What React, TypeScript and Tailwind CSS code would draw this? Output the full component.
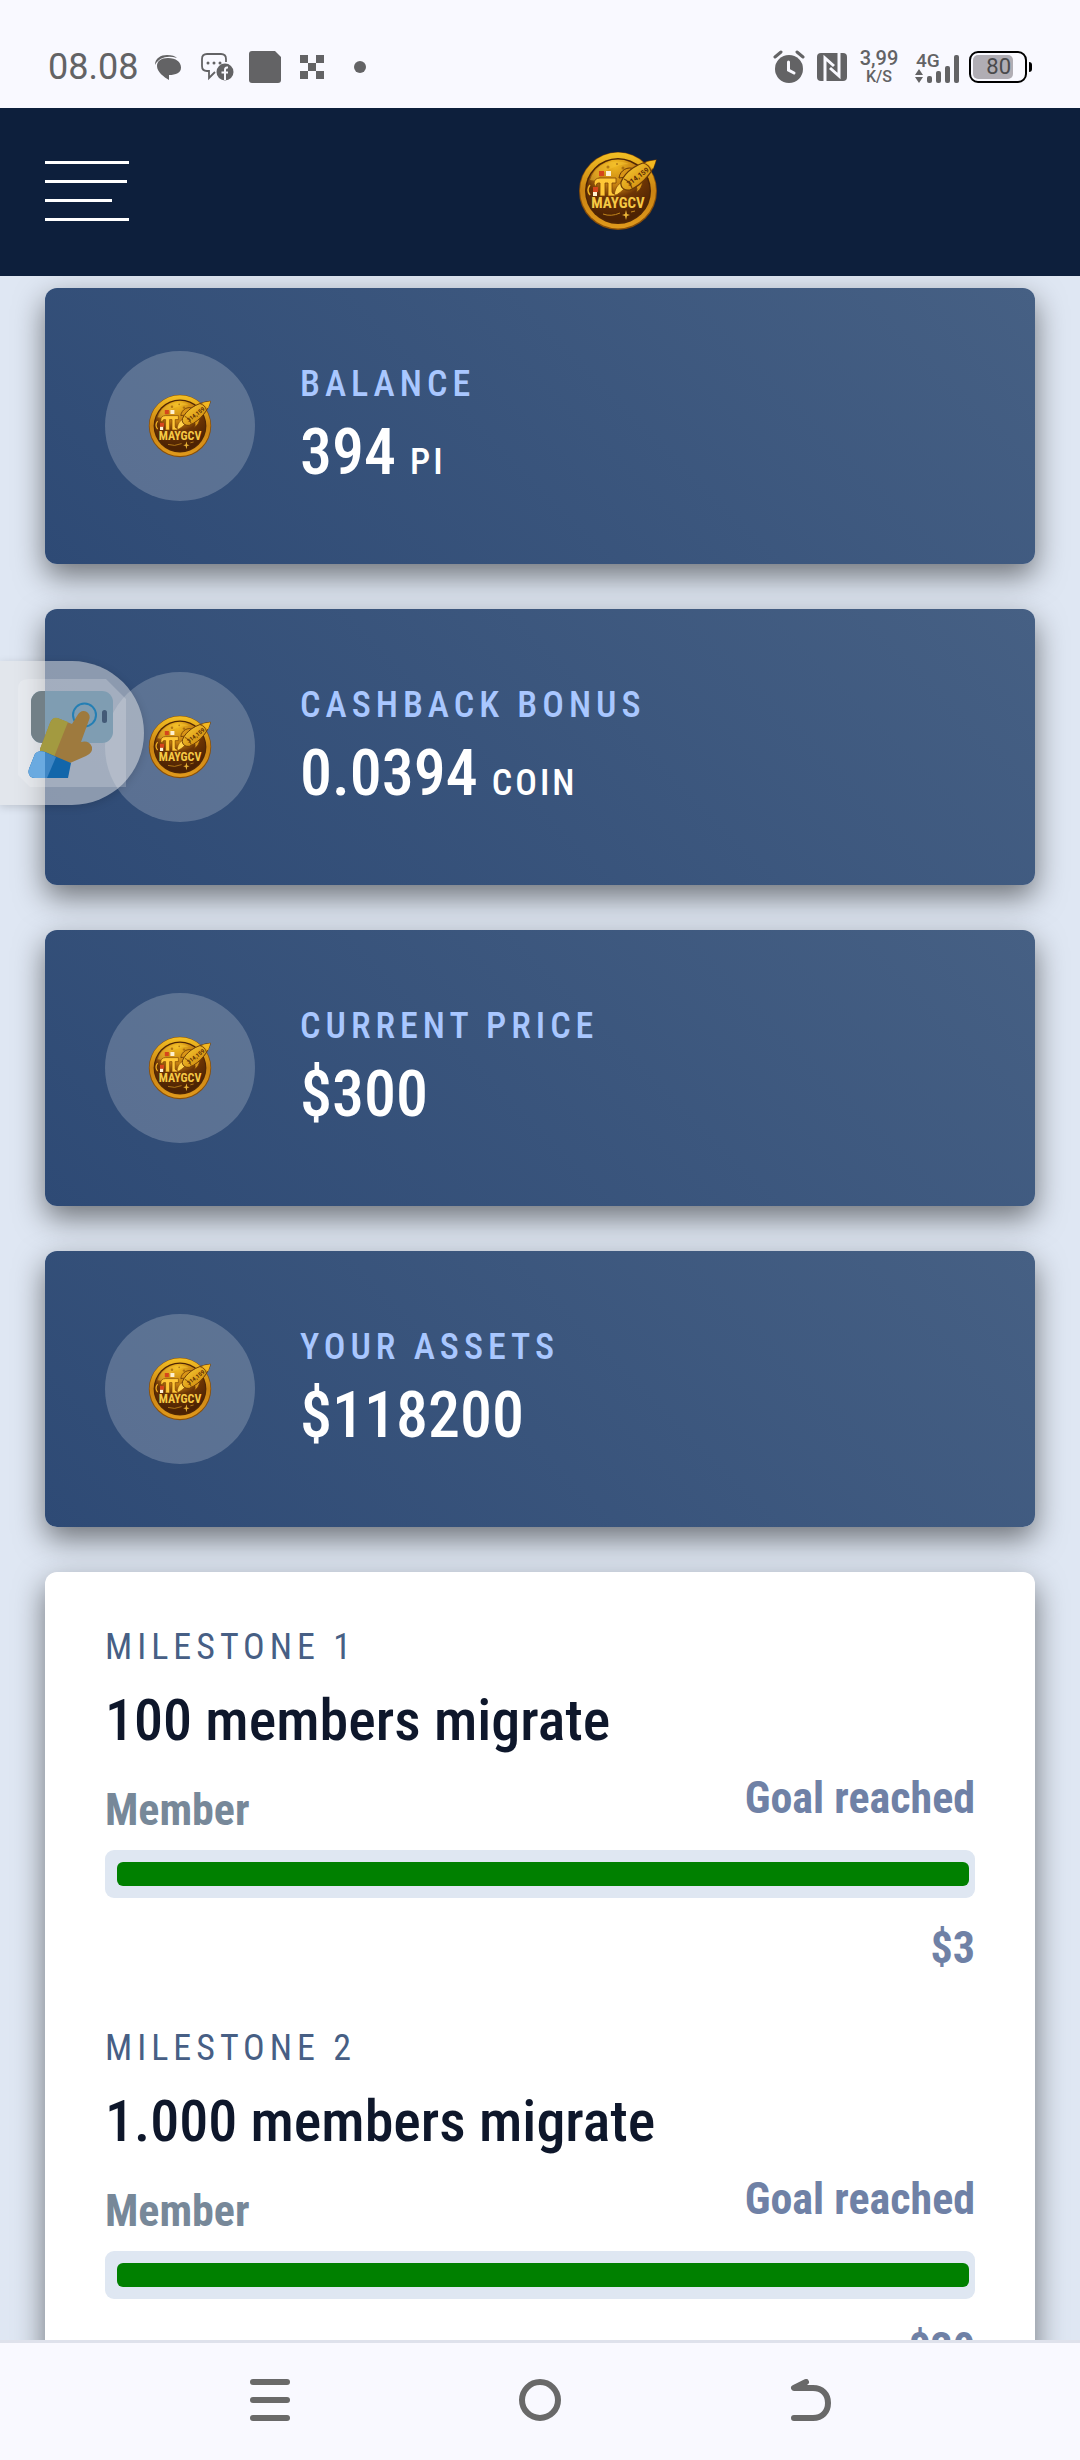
import React from "react";

function Coin({ className }: { className: string }) {
  return (
    <svg viewBox="0 1 80 80" className={className} role="img" aria-label="MAYGCV coin">
      <defs>
        <linearGradient id="rim" x1="0" y1="0" x2="0" y2="1">
          <stop offset="0" stopColor="#f3c024" />
          <stop offset="0.5" stopColor="#c98212" />
          <stop offset="1" stopColor="#e09a1c" />
        </linearGradient>
        <radialGradient id="face" cx="0.45" cy="0.08" r="0.85">
          <stop offset="0" stopColor="#f2bb20" />
          <stop offset="0.4" stopColor="#c27d10" />
          <stop offset="0.62" stopColor="#6d3505" />
          <stop offset="1" stopColor="#4c2203" />
        </radialGradient>
        <linearGradient id="rocket" x1="0" y1="0" x2="1" y2="1">
          <stop offset="0" stopColor="#ffd83c" />
          <stop offset="0.6" stopColor="#dc9c17" />
          <stop offset="1" stopColor="#9c5b08" />
        </linearGradient>
      </defs>
      <circle cx="40" cy="41" r="39" fill="#8a4f08" />
      <circle cx="40" cy="40.500" r="38" fill="url(#rim)" />
      <circle cx="40" cy="41" r="33" fill="#4f2604" />
      <circle cx="40" cy="41" r="31.500" fill="url(#face)" />
      <path d="M12 30C18 13 35 8 51 14C38 15 25 20 18 31Z" fill="#f5c431" opacity="0.5" />
      <g fill="#8b500b" opacity="0.6">
        <circle cx="30" cy="17" r="1.500" />
        <circle cx="39" cy="14" r="1" />
        <circle cx="45" cy="18" r="1.500" />
        <circle cx="25" cy="22" r="1" />
      </g>
      <path d="M41 28C42 20 50 16 56 19L49 27ZM58 31L64 25C66 32 64 39 58 43C60 38 58 36 56 35Z" fill="#d99517" stroke="#6b3906" strokeWidth="1" />
      <path d="M36 46C37 39 39 34 45 32L48 37C44 41 41 44 36 46Z" fill="#ffd24a" stroke="#8f4e07" strokeWidth="0.800" />
      <path d="M43 32C47 22 59 12 78 10C76 20 66 34 52 40C47 41 42 38 43 32Z" fill="url(#rocket)" stroke="#6b3a06" strokeWidth="1.200" />
      <path d="M68 12L78 10L75 19Z" fill="#f3b820" />
      <path d="M65 13C69 14 72 17 73 21M46 29C49 30 53 34 54 38" fill="none" stroke="#7c4507" strokeWidth="1.200" />
      <text x="60" y="29" transform="rotate(-37 60 27)" textAnchor="middle" fontSize="7" fontWeight="700" fill="#5d2d04" fontFamily="Roboto, sans-serif">314,159</text>
      <path d="M16 34Q16 28 22 28H38V33H34V42Q34 44 37 44V46H30V33H27V46H22V33H20Q18 33 18 37Z" fill="#ffc736" stroke="#7d4305" strokeWidth="0.800" />
      <path d="M12 35Q8 40 12 45" fill="none" stroke="#f0b323" strokeWidth="1.500" />
      <rect x="21" y="21" width="5" height="5" fill="#d6461b" />
      <rect x="28" y="21" width="5" height="5" fill="#fff1d0" />
      <rect x="15" y="37" width="5" height="5" fill="#d6461b" />
      <rect x="15" y="42" width="4" height="4" fill="#fff1d0" />
      <text x="40" y="58" textAnchor="middle" fontSize="15" fontWeight="700" fill="#f6c944" fontFamily="Roboto Condensed, Roboto, sans-serif">MAYGCV</text>
      <path d="M25 64Q33 67 42 63M53 62L57 61" fill="none" stroke="#c2851b" strokeWidth="1" />
      <path d="M48 60L49 64L52 65L49 66L48 70L47 66L44 65L47 64Z" fill="#eab436" />
    </svg>
  );
}

function StatusBar() {
  return (
    <div className="flex h-[108px] shrink-0 items-center justify-between bg-[#f9f9ff] pr-12 pl-12 pt-[26px] text-[#636365]">
      <div className="flex items-center">
        <span className="mr-4 text-[36px] leading-[40px] [font-family:Roboto,sans-serif]">08.08</span>
        <svg viewBox="0 0 28 28" className="mr-[18px] size-7" aria-hidden="true">
          <path d="M1 12C1 5 7 2 13 2C18 2 21 3 23 5C14 2 5 4 1 12Z" fill="currentColor" />
          <path d="M14 5C22 5 27 9 27 14.500C27 20 22 22 15 22V27C10 24 3 19 3 13C3 8 7 5 14 5Z" fill="currentColor" />
        </svg>
        <svg viewBox="0 0 34 30" className="mr-3.5 h-[30px] w-[34px]" aria-hidden="true">
          <path d="M26 10V7Q26 2 21 2H7Q2 2 2 7V14Q2 19 7 19H9V26L15 20" fill="none" stroke="currentColor" strokeWidth="1.800" />
          <circle cx="8" cy="11" r="1.500" fill="currentColor" />
          <circle cx="14" cy="11" r="1.500" fill="currentColor" />
          <circle cx="20" cy="11" r="1.500" fill="currentColor" />
          <circle cx="25" cy="20" r="8.500" fill="currentColor" />
          <path d="M28 15.500H27Q25 15.500 25 18V28M21.500 20.500H28" fill="none" stroke="#f9f9ff" strokeWidth="2" />
        </svg>
        <svg viewBox="0 0 34 34" className="mr-[18px] size-[34px]" aria-hidden="true">
          <path d="M4 1H27L33 7V30Q33 33 30 33H4Q1 33 1 30V4Q1 1 4 1Z" fill="currentColor" />
        </svg>
        <svg viewBox="0 0 24 24" className="mr-[30px] size-6" fill="currentColor" aria-hidden="true">
          <path d="M0 0H8V8H0ZM16 0H24V8H16ZM8 8H16V16H8ZM0 16H8V24H0ZM16 16H24V24H16Z" />
        </svg>
        <span className="size-3 rounded-full bg-[#636365]" />
      </div>
      <div className="flex items-center">
        <svg viewBox="0 0 32 34" className="mr-3 h-[34px] w-8" aria-hidden="true">
          <circle cx="16" cy="19" r="14" fill="currentColor" />
          <path d="M2 7L8 2M24 2L30 7" stroke="currentColor" strokeWidth="3" strokeLinecap="round" />
          <path d="M15.500 12V20L21 23" fill="none" stroke="#f9f9ff" strokeWidth="3" strokeLinecap="round" />
        </svg>
        <svg viewBox="0 0 30 28" className="mr-3 h-7 w-[30px]" aria-hidden="true">
          <rect width="30" height="28" rx="4" fill="currentColor" />
          <path d="M8 28V5L17 13M13 15L22 23V0" fill="none" stroke="#f9f9ff" strokeWidth="3" />
        </svg>
        <span className="mr-4 flex w-10 flex-col items-center font-medium [font-family:Roboto,sans-serif]">
          <span className="text-[20px] leading-[20px]">3,99</span>
          <span className="text-[16px] leading-[18px]">K/S</span>
        </span>
        <svg viewBox="0 -3 44 40" className="mr-2.5 h-10 w-11" fill="currentColor" aria-hidden="true">
          <text x="1" y="17" fontSize="19" fontWeight="500" fontFamily="Roboto, sans-serif">4G</text>
          <path d="M0 25L4 19L8 25ZM0 27L4 33L8 27Z" />
          <rect x="12" y="26" width="5" height="7" rx="2" />
          <rect x="21" y="21" width="5" height="12" rx="2" />
          <rect x="30" y="16" width="5" height="17" rx="2" />
          <rect x="39" y="5" width="5" height="28" rx="2" />
        </svg>
        <span className="flex h-8 w-[58px] items-center rounded-[9px] border-2 border-black p-0.5">
          <span className="flex h-6 w-10 items-center justify-end rounded-[5px] bg-[#b0adb4] pr-0.5 text-[22px] leading-6 text-[#4a4a4c] [font-family:Roboto,sans-serif]">80</span>
        </span>
        <span className="ml-0.5 h-2.5 w-[3px] rounded-r-sm bg-black" />
      </div>
    </div>
  );
}

function Header() {
  return (
    <header className="flex h-[168px] shrink-0 items-center bg-[#0d1f3c] pb-0.5 pl-[45px]">
      <button type="button" aria-label="Open menu" className="mr-[27px] flex w-[84px] flex-col gap-4">
        <span className="h-[3px] w-[84px] bg-white" />
        <span className="h-[3px] w-[82px] bg-white" />
        <span className="h-[3px] w-[67px] bg-white" />
        <span className="h-[3px] w-[84px] bg-white" />
      </button>
      <a href="#home" aria-label="Home" className="flex flex-1 justify-center">
        <Coin className="size-20" />
      </a>
    </header>
  );
}

const stats = [
  { label: "BALANCE", value: "394", unit: "PI" },
  { label: "CASHBACK BONUS", value: "0.0394", unit: "COIN" },
  { label: "CURRENT PRICE", value: "$300", unit: "" },
  { label: "YOUR ASSETS", value: "$118200", unit: "" },
];

function StatCard({ label, value, unit }: { label: string; value: string; unit: string }) {
  return (
    <section className="flex items-center gap-[45px] rounded-xl bg-linear-45 from-[#2e4a75] to-[#466084] px-[60px] py-[63px] shadow-[0_12px_30px_rgba(0,0,0,0.5)]">
      <div className="flex size-[150px] shrink-0 items-center justify-center rounded-full bg-white/20">
        <Coin className="size-16" />
      </div>
      <div className="flex flex-col gap-3">
        <h2 className="text-[36px] leading-[42px] font-medium tracking-[5px] text-[#a9c7ff]">{label}</h2>
        <p className="text-[64px] leading-[72px] font-medium text-white">
          {value}
          {unit && <span className="ml-3.5 text-[36px] leading-none tracking-[3px]">{unit}</span>}
        </p>
      </div>
    </section>
  );
}

const milestones = [
  { label: "MILESTONE 1", title: "100 members migrate", reward: "$3", percent: 100 },
  { label: "MILESTONE 2", title: "1.000 members migrate", reward: "$30", percent: 100 },
];

function Milestone({ label, title, reward, percent }: { label: string; title: string; reward: string; percent: number }) {
  return (
    <article className="flex flex-col">
      <p className="text-[36px] leading-[42px] tracking-[5px] text-[#475f85]">{label}</p>
      <h3 className="mt-4 text-[58px] leading-[72px] font-medium text-[#0e172b]">{title}</h3>
      <div className="mt-[18px] flex h-[60px] justify-between text-[44px] leading-[48px] font-bold">
        <span className="self-end text-[#778899]">Member</span>
        <span className="text-[#6f81a6]">Goal reached</span>
      </div>
      <div role="progressbar" aria-label={title} aria-valuenow={percent} className="mt-4 h-12 rounded-[9px] bg-[#dfe7f2] py-3 pr-1.5 pl-3">
        <div className="h-6 rounded-md bg-[#008000]" style={{ width: `${percent}%` }} />
      </div>
      <p className="mt-[26px] self-end text-[44px] leading-[48px] font-bold text-[#6f81a6]">{reward}</p>
    </article>
  );
}

function TouchAssistant() {
  return (
    <button type="button" aria-label="Touch assistant" className="absolute top-[661px] left-0 flex h-36 w-36 items-center rounded-r-full bg-[#e6e6e6]/50 pl-[18px] shadow-[0_2px_8px_rgba(0,0,0,0.15)]">
      <svg viewBox="0 0 108 108" className="size-[108px]" aria-hidden="true">
        <path d="M10 0H88L108 20V108H12L0 96V10Q0 0 10 0Z" fill="#fff" opacity="0.2" />
        <rect x="13" y="12" width="82" height="52" rx="11" fill="#7f9db2" />
        <path d="M24 12A11 11 0 0 0 13 23V53A11 11 0 0 0 24 64H27V12Z" fill="#728087" />
        <rect x="84" y="31" width="5" height="13" rx="2.500" fill="#435a77" />
        <circle cx="66.500" cy="36" r="11.500" fill="none" stroke="#247fb4" strokeWidth="2" />
        <path d="M22 70L32 44Q35 37 42 40L49 43L54 45L59 37Q63 30 69 33Q73 36 71 41L63 63Q71 61 74 68Q75 74 68 77L52 84L38 80L22 74Z" fill="#9e7a3e" />
        <path d="M22 70L32 44Q35 36 42 40L50 43L36 78L22 74Z" fill="#a39a40" />
        <path d="M17 75Q20 71 27 73L53 84L50 99H17Q9 98 11 90Z" fill="#1266aa" />
        <path d="M17 75Q20 71 27 73L38 78L29 99H17Q9 98 11 90Z" fill="#3f86c4" />
        <path d="M17 75Q20 71 27 73V99H17Q9 98 11 90Z" fill="#6aaae0" />
      </svg>
    </button>
  );
}

function NavigationBar() {
  return (
    <nav className="flex h-[120px] shrink-0 items-center justify-center border-t-[3px] border-[#dfe2ec] bg-[#f9f9ff] pb-[3px] text-[#696969]">
      <button type="button" aria-label="Recent apps" className="flex w-1/4 justify-center">
        <svg viewBox="0 0 42 42" className="size-[42px]" fill="currentColor" aria-hidden="true">
          <rect x="1" y="0" width="40" height="6" rx="3" />
          <rect x="1" y="18" width="40" height="6" rx="3" />
          <rect x="1" y="36" width="40" height="6" rx="3" />
        </svg>
      </button>
      <button type="button" aria-label="Home screen" className="flex w-1/4 justify-center">
        <span className="size-[42px] rounded-full border-6 border-[#696969]" />
      </button>
      <button type="button" aria-label="Back" className="flex w-1/4 justify-center">
        <svg viewBox="0 0 42 42" className="size-[42px]" fill="none" stroke="currentColor" strokeWidth="6" strokeLinecap="round" strokeLinejoin="round" aria-hidden="true">
          <path d="M17 3L5 9H24C33 9 39 15 39 24S33 39 24 39H5" />
        </svg>
      </button>
    </nav>
  );
}

export default function App() {
  return (
    <div className="relative flex h-screen flex-col bg-[#dfe7f3] [font-family:'Roboto_Condensed',Roboto,sans-serif]">
      <StatusBar />
      <Header />
      <main className="flex min-h-0 flex-1 flex-col gap-[45px] overflow-y-auto px-[45px] pt-3 pb-12 [scrollbar-width:none]">
        {stats.map((stat) => (
          <StatCard key={stat.label} {...stat} />
        ))}
        <section aria-label="Milestones" className="flex flex-col gap-[55px] rounded-xl bg-white px-[60px] py-[54px] shadow-[0_12px_30px_rgba(0,0,0,0.5)]">
          {milestones.map((milestone) => (
            <Milestone key={milestone.label} {...milestone} />
          ))}
        </section>
      </main>
      <TouchAssistant />
      <NavigationBar />
    </div>
  );
}
